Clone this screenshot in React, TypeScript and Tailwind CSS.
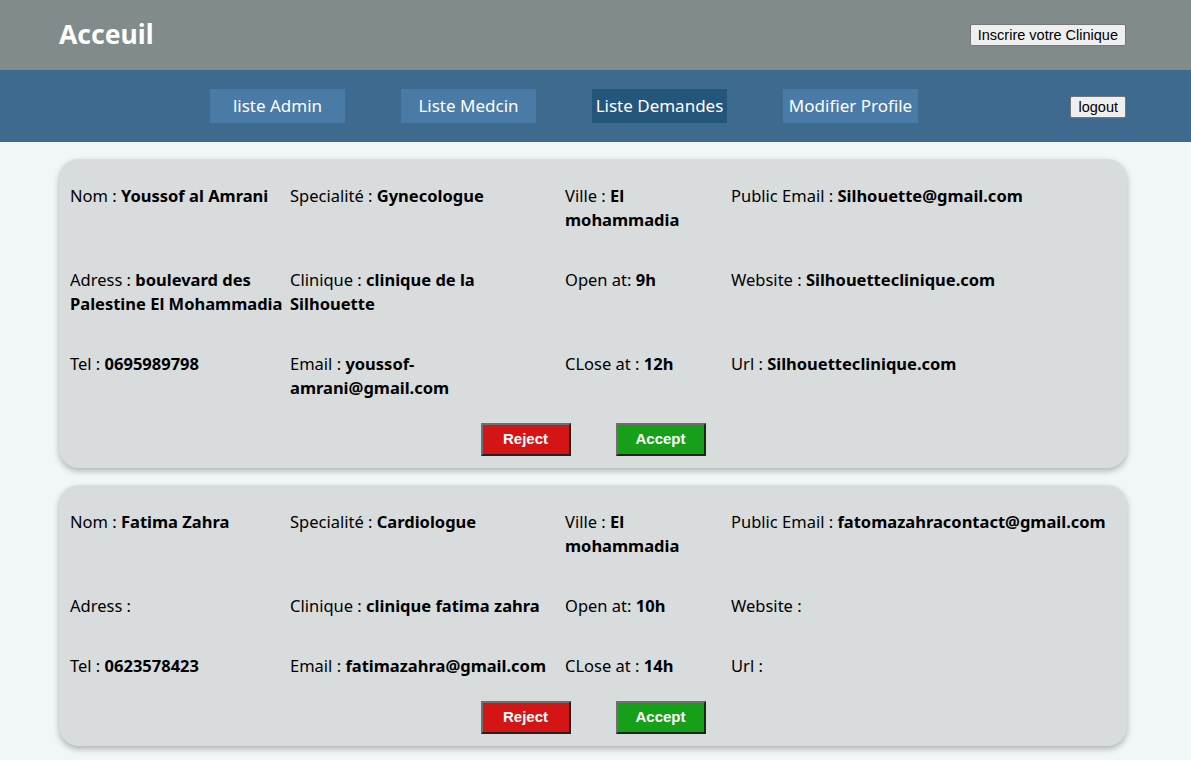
import React from "react";

// Field shape for a clinic request
interface Field {
  label: string;
  value: string;
}

interface Demande {
  id: number;
  fields: Field[];
}

const demandes: Demande[] = [
  {
    id: 1,
    fields: [
      { label: "Nom : ", value: "Youssof al Amrani" },
      { label: "Specialité : ", value: "Gynecologue" },
      { label: "Ville : ", value: "El mohammadia" },
      { label: "Public Email : ", value: "Silhouette@gmail.com" },
      { label: "Adress : ", value: "boulevard des Palestine El Mohammadia" },
      { label: "Clinique : ", value: "clinique de la Silhouette" },
      { label: "Open at: ", value: "9h" },
      { label: "Website : ", value: "Silhouetteclinique.com" },
      { label: "Tel : ", value: "0695989798" },
      { label: "Email : ", value: "youssof-amrani@gmail.com" },
      { label: "CLose at : ", value: "12h" },
      { label: "Url : ", value: "Silhouetteclinique.com" },
    ],
  },
  {
    id: 2,
    fields: [
      { label: "Nom : ", value: "Fatima Zahra" },
      { label: "Specialité : ", value: "Cardiologue" },
      { label: "Ville : ", value: "El mohammadia" },
      { label: "Public Email : ", value: "fatomazahracontact@gmail.com" },
      { label: "Adress : ", value: "" },
      { label: "Clinique : ", value: "clinique fatima zahra" },
      { label: "Open at: ", value: "10h" },
      { label: "Website : ", value: "" },
      { label: "Tel : ", value: "0623578423" },
      { label: "Email : ", value: "fatimazahra@gmail.com" },
      { label: "CLose at : ", value: "14h" },
      { label: "Url : ", value: "" },
    ],
  },
];

const navLinks = ["liste Admin", "Liste Medcin", "Liste Demandes", "Modifier Profile"];

const DemandeCard: React.FC<{ demande: Demande }> = ({ demande }) => {
  return (
    <div className="bg-[#d8dcdc] rounded-[20px] shadow-[0_3px_6px_rgba(0,0,0,0.28)] pt-[25px] pb-[12px] pl-[11px]">
      {/* Info grid */}
      <div className="grid grid-cols-[220px_275px_166px_1fr] gap-y-[36px] text-[16.5px] leading-[24px] text-black">
        {demande.fields.map((f, i) => (
          <div key={i} className="pr-[4px]">
            {f.label}
            <b className="font-bold">{f.value}</b>
          </div>
        ))}
      </div>

      {/* Actions */}
      <div className="flex justify-center gap-[45px] mt-[23px] pr-[11px] font-['Liberation_Sans',Arial,sans-serif]">
        <button className="w-[90px] h-[33px] bg-[#d41515] text-white font-bold text-[15px] border-2 border-t-[#6f6f6f] border-l-[#6f6f6f] border-b-[#222] border-r-[#222]">
          Reject
        </button>
        <button className="w-[90px] h-[33px] bg-[#16a01a] text-white font-bold text-[15px] border-2 border-t-[#6f6f6f] border-l-[#6f6f6f] border-b-[#222] border-r-[#222]">
          Accept
        </button>
      </div>
    </div>
  );
};

const App: React.FC = () => {
  return (
    <div className="min-h-[760px] bg-[#f1f6f6] font-['Noto_Sans',sans-serif]">
      {/* Top bar */}
      <div className="h-[70px] bg-[#818b8b] flex items-center justify-between pl-[59px] pr-[65px]">
        <h1 className="text-white text-[26.5px] font-bold">Acceuil</h1>
        <button className="bg-[#efefef] border border-[#767676] rounded-[2px] px-[7px] h-[22px] text-[14.5px] text-black font-['Liberation_Sans',Arial,sans-serif] -mt-[1px]">
          Inscrire votre Clinique
        </button>
      </div>

      {/* Nav bar */}
      <div className="h-[72px] bg-[#3d6a8e] flex items-center pl-[210px] pr-[65px]">
        <div className="flex gap-[56px]">
          {navLinks.map((l) => (
            <a
              key={l}
              className={`w-[135px] h-[34px] flex items-center justify-center text-white text-[17px] ${
                l === "Liste Demandes" ? "bg-[#24557b]" : "bg-[#4a7ba7]"
              }`}
            >
              {l}
            </a>
          ))}
        </div>
        <button className="ml-auto mt-[2px] bg-[#efefef] border border-[#767676] rounded-[2px] px-[7px] h-[22px] text-[14.5px] text-black font-['Liberation_Sans',Arial,sans-serif]">
          logout
        </button>
      </div>

      {/* Demandes list */}
      <div className="flex flex-col gap-[17px] pt-[17px] pb-[15px] pl-[59px] w-[1127px]">
        {demandes.map((d) => (
          <DemandeCard key={d.id} demande={d} />
        ))}
      </div>
    </div>
  );
};

export default App;
